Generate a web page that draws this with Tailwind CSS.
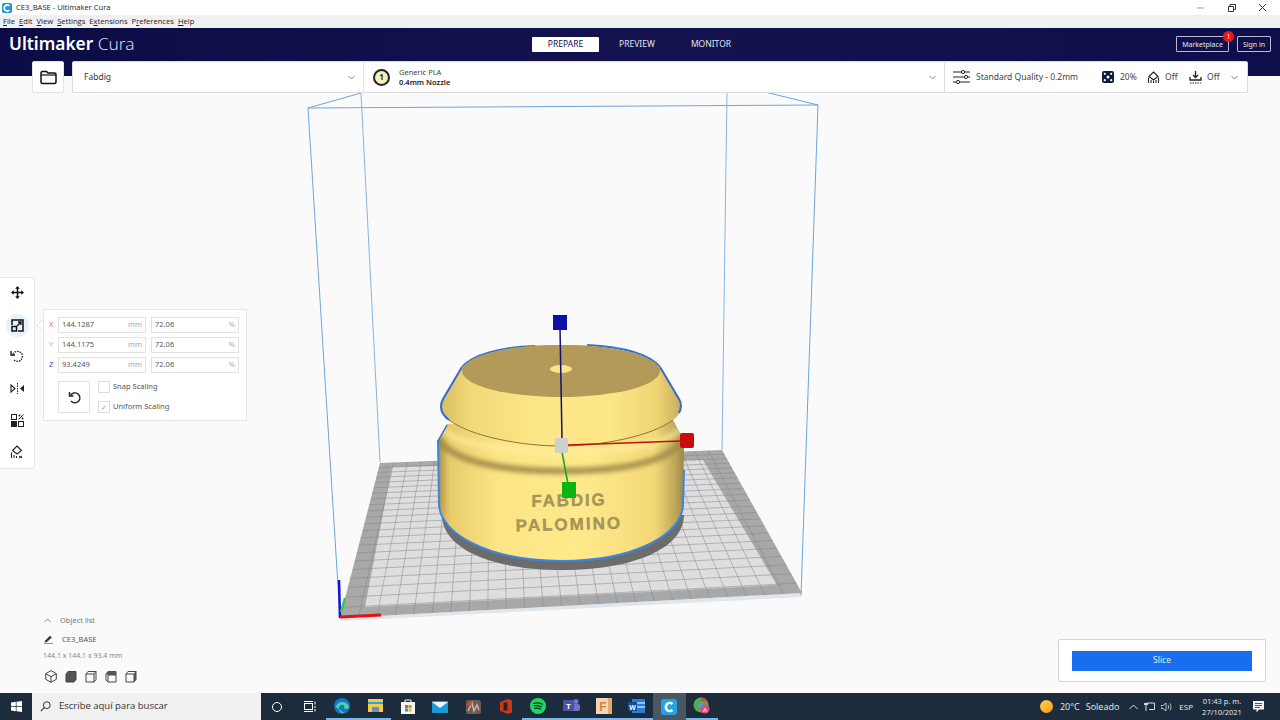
<!DOCTYPE html>
<html lang="es">
<head>
  <meta charset="UTF-8" />
  <title>CE3_BASE - Ultimaker Cura</title>
  <script src="https://cdn.jsdelivr.net/npm/@tailwindcss/browser@4"></script>
</head>
<body class="bg-white overflow-hidden font-['Noto_Sans',sans-serif]">
<div class="w-[1280px] h-[720px] flex flex-col overflow-hidden">

  <!-- Title bar -->
  <div class="h-[15px] bg-white flex items-center justify-between shrink-0">
    <div class="flex items-center gap-[4px] pl-[2px]">
      <svg width="10" height="10" viewBox="0 0 10 10"><rect width="10" height="10" rx="2" fill="#1c9ad6"/><path d="M7.4 3 A3 3 0 1 0 7.4 7" fill="none" stroke="#fff" stroke-width="1.8"/></svg>
      <span class="text-[7.6px] leading-none text-[#222] font-['Open_Sans',sans-serif]">CE3_BASE - Ultimaker Cura</span>
    </div>
    <div class="flex items-center">
      <svg class="mr-[23px]" width="8" height="8" viewBox="0 0 8 8"><path d="M0 4h7" stroke="#999" stroke-width="1"/></svg>
      <svg class="mr-[22px]" width="8" height="8" viewBox="0 0 8 8"><path d="M.5 2.500h5v5h-5zM2 2.500V.5h5.500v5H5.500" fill="none" stroke="#333" stroke-width="1"/></svg>
      <svg class="mr-[13px]" width="9" height="9" viewBox="0 0 9 9"><path d="M1 1l7 7M8 1l-7 7" stroke="#333" stroke-width="1"/></svg>
    </div>
  </div>

  <!-- Menu bar -->
  <div class="h-[13px] bg-[#f0f0f0] flex items-center pl-[3px] pt-[1px] gap-[4px] text-[7.6px] leading-none text-[#222] shrink-0 font-['Open_Sans',sans-serif]">
    <span><u>F</u>ile</span><span><u>E</u>dit</span><span><u>V</u>iew</span><span><u>S</u>ettings</span><span>E<u>x</u>tensions</span><span>P<u>r</u>eferences</span><span><u>H</u>elp</span>
  </div>

  <!-- Header -->
  <div class="relative h-[48px] shrink-0 bg-gradient-to-r from-[#0b0c46] via-[#13124f] to-[#0e0f4a] z-10">
    <div class="absolute left-[9px] top-[3px] text-[17.3px] leading-[26px] text-white whitespace-nowrap"><span class="font-semibold">Ultimaker</span> <span class="font-light text-[#d8d8e8]">Cura</span></div>

    <div class="absolute left-[532px] top-[9px] flex items-center text-[8.5px] leading-none">
      <div class="w-[67px] h-[15px] bg-white text-[#10104e] flex items-center justify-center rounded-[1px]">PREPARE</div>
      <div class="w-[76px] h-[15px] text-[#e4e4f0] flex items-center justify-center">PREVIEW</div>
      <div class="w-[72px] h-[15px] text-[#e4e4f0] flex items-center justify-center">MONITOR</div>
    </div>

    <div class="absolute left-[1176px] top-[8px] flex gap-[8px] text-[7px] leading-none text-[#e6e6f2]">
      <div class="relative w-[53px] h-[16px] border border-[#b9b9cf] rounded-[1px] flex items-center justify-center">Marketplace
        <span class="absolute -right-[6px] -top-[6px] w-[11px] h-[11px] rounded-full bg-[#f01414] text-white text-[7px] flex items-center justify-center">1</span>
      </div>
      <div class="w-[34px] h-[16px] border border-[#b9b9cf] rounded-[1px] flex items-center justify-center">Sign in</div>
    </div>

    <!-- Toolbar hanging over the header -->
    <div class="absolute left-[32px] top-[33px] flex gap-[8px] text-[#333]">
      <div class="w-[32px] h-[32px] bg-white border border-[#e2e2e2] rounded-[2px] flex items-center justify-center">
        <svg width="17" height="15" viewBox="0 0 17 15"><path d="M1 3.500C1 2 1.500 1.500 2.500 1.500H6.500L8 3H14.500C15.500 3 16 3.700 16 4.500V12C16 13 15.500 13.500 14.500 13.500H2.500C1.500 13.500 1 13 1 12Z" fill="none" stroke="#111" stroke-width="1.500"/><path d="M1 5H16" stroke="#111" stroke-width="1.200"/></svg>
      </div>
      <div class="w-[1176px] h-[32px] bg-white border border-[#dcdcdc] rounded-[2px] flex items-center">
        <div class="w-[290px] h-full flex items-center justify-between pl-[11px] pr-[8px] text-[8.5px]">
          <span>Fabdig</span>
          <svg width="7" height="5" viewBox="0 0 7 5"><path d="M.5 1l3 3 3-3" fill="none" stroke="#888" stroke-width="1"/></svg>
        </div>
        <div class="w-[581px] h-full border-l border-[#e4e4e4] flex items-center justify-between pl-[9px] pr-[8px]">
          <div class="flex items-center gap-[9px]">
            <span class="w-[17px] h-[17px] rounded-full bg-[#f7eeb8] border-[2px] border-[#222] flex items-center justify-center text-[8px] font-bold leading-none">1</span>
            <div class="text-[7.5px] leading-[10px]"><div class="text-[#444]">Generic PLA</div><div class="font-semibold text-[#222]">0.4mm Nozzle</div></div>
          </div>
          <svg width="7" height="5" viewBox="0 0 7 5"><path d="M.5 1l3 3 3-3" fill="none" stroke="#888" stroke-width="1"/></svg>
        </div>
        <div class="flex-1 h-full border-l border-[#dcdcdc] flex items-center pl-[8px] text-[8.5px] text-[#444]">
          <svg width="17" height="14" viewBox="0 0 17 14"><path d="M0 2h8M12 2h5M0 7h11M15 7h2M0 12h3M7 12h10" stroke="#222" stroke-width="1.200"/><circle cx="10" cy="2" r="1.600" fill="none" stroke="#222"/><circle cx="13" cy="7" r="1.600" fill="none" stroke="#222"/><circle cx="5" cy="12" r="1.600" fill="none" stroke="#222"/></svg>
          <span class="ml-[6px] w-[126px]">Standard Quality - 0.2mm</span>
          <svg width="12" height="12" viewBox="0 0 12 12"><rect width="12" height="12" rx="2" fill="#0f1a44"/><circle cx="6" cy="6" r="1.500" fill="#fff"/><circle cx="2.800" cy="2.800" r="1.100" fill="#fff"/><circle cx="9.200" cy="2.800" r="1.100" fill="#fff"/><circle cx="2.800" cy="9.200" r="1.100" fill="#fff"/><circle cx="9.200" cy="9.200" r="1.100" fill="#fff"/></svg>
          <span class="ml-[6px] w-[27px]">20%</span>
          <svg width="13" height="13" viewBox="0 0 13 13"><path d="M6.500 1L11 5.500 6.500 9 2 5.500Z" fill="none" stroke="#222" stroke-width="1.100"/><path d="M1.500 6.500V12M4 9v3M6.500 10v2M9 9v3M11.500 6.500V12" stroke="#222" stroke-width="1.100"/></svg>
          <span class="ml-[5px] w-[24px]">Off</span>
          <svg width="13" height="13" viewBox="0 0 13 13"><path d="M6.500 0v6M4 4l2.500 2.500L9 4" fill="none" stroke="#222" stroke-width="1.300"/><path d="M1 6v3h11V6" fill="none" stroke="#222" stroke-width="1.300"/><path d="M1 12h11" stroke="#222" stroke-width="1.100" stroke-dasharray="1.500 1"/></svg>
          <span class="ml-[5px] w-[24px]">Off</span>
          <svg width="7" height="5" viewBox="0 0 7 5"><path d="M.5 1l3 3 3-3" fill="none" stroke="#777" stroke-width="1"/></svg>
        </div>
      </div>
    </div>
  </div>

  <!-- Viewport -->
  <div class="relative flex-1 bg-[#fafafa]">
    <!-- 3D scene: free canvas, page coordinates minus 76px -->
    <svg class="absolute left-0 top-0" width="1280" height="617" viewBox="0 76 1280 617">
      <defs>
        <linearGradient id="side" x1="0" x2="1" y1="0" y2="0">
          <stop offset="0" stop-color="#b89f52"/><stop offset=".05" stop-color="#e8cc6c"/><stop offset=".25" stop-color="#fde585"/><stop offset=".6" stop-color="#ffe98c"/><stop offset=".88" stop-color="#f4d877"/><stop offset="1" stop-color="#a8924e"/>
        </linearGradient>
        <linearGradient id="upper" x1="0" x2="1" y1="0" y2="0">
          <stop offset="0" stop-color="#d9bd62"/><stop offset=".12" stop-color="#f2d877"/><stop offset=".4" stop-color="#fde687"/><stop offset=".7" stop-color="#fde687"/><stop offset=".9" stop-color="#efd473"/><stop offset="1" stop-color="#c9ae5c"/>
        </linearGradient>
        <filter id="soft" x="-10%" y="-50%" width="120%" height="200%"><feGaussianBlur stdDeviation="2.500"/></filter>
        <filter id="softer" x="-20%" y="-20%" width="140%" height="140%"><feGaussianBlur stdDeviation="4"/></filter>
        <clipPath id="bodyClip"><path d="M447 424 L438 440 L439 505 C441 535 490 561 562 561 C634 561 682 535 683 505 L684 440 L673 420 Z"/></clipPath>
      </defs>

      <!-- plate -->
      <polygon points="340,618 801,593 802,597 342,621" fill="#dfe6ec"/>
      <polygon points="340,618 802,593 722,450 380,463" fill="#a8a8a8"/>
      <polygon points="365,607 777,585 703,460 392,467" fill="#dedede"/>
      <g id="grid" stroke="#80858a" stroke-width=".5"></g>

      <!-- build volume -->
      <g fill="none" stroke="#6aa5e0" stroke-width="1">
        <path d="M308 108L818 105M308 108L340 618M818 105L801 595"/>
        <path d="M308 108L361 93M818 105L765 92"/>
        <path d="M361 93L380 462M727 93L722 450" stroke="#86b4e4"/>
      </g>

      <!-- model shadow -->
      <path d="M442 515 C442 548 490 570 562 570 C634 570 684 548 684 515Z" fill="#6c6c6c"/>

      <!-- lower body -->
      <path d="M447 424 L438 440 L439 505 C441 535 490 561 562 561 C634 561 682 535 683 505 L684 440 L673 420 Z" fill="url(#side)"/>
      <g clip-path="url(#bodyClip)">
        <path d="M436 438 C455 464 510 471 562 471 C615 471 668 464 686 438" fill="none" stroke="#a08a48" stroke-width="6" filter="url(#soft)"/>
        <path d="M436 424 C450 445 510 452 562 452 C615 452 672 445 686 424" fill="none" stroke="#fff0a0" stroke-width="7" opacity=".6" filter="url(#soft)"/>
        <path d="M436 440 V510 M686 440 V510" stroke="#8f7c3e" stroke-width="5" filter="url(#softer)"/>
      </g>
      <path d="M438 440 L439 505 C441 535 490 561 562 561 C634 561 682 535 683 505 L684 470" fill="none" stroke="#3a86e0" stroke-width="2"/>
      <path d="M438 441 L447 425" stroke="#3a6fd0" stroke-width="1.500"/>

      <!-- upper body -->
      <path d="M462 367 L443 399 C439 407 441 414 449 420 C470 436 520 446 561 446 C602 446 652 436 673 420 C681 414 683 407 679 399 L660 367Z" fill="url(#upper)"/>
      <path d="M449 420 C470 436 520 446 561 446 C602 446 652 436 673 420" fill="none" stroke="#8a7636" stroke-width="1"/>
      <path d="M462 367 L443 399 C439 407 441 414 449 420 M660 367 L679 399 C682 404 681 409 679 413" fill="none" stroke="#3568d8" stroke-width="2"/>
      <path d="M462 367 C472 355 500 347 535 346 M587 345 C625 347 650 355 660 367" fill="none" stroke="#2f72d8" stroke-width="2"/>
      <ellipse cx="561" cy="371" rx="99" ry="26" fill="#b39a58"/>
      <path d="M462 367 C480 350 520 345 561 345 C602 345 642 350 660 367 L660 372 L462 372Z" fill="#b39a58"/>
      <ellipse cx="561" cy="369" rx="11" ry="4" fill="#fbe588"/>

      <!-- embossed text -->
      <text x="569" y="506" text-anchor="middle" font-family="Liberation Sans" font-weight="700" font-size="17" letter-spacing="1.800" fill="#a79858" stroke="#8f8248" stroke-width=".3" transform="rotate(-1 569 506)">FABDIG</text>
      <text x="569" y="530" text-anchor="middle" font-family="Liberation Sans" font-weight="700" font-size="17" letter-spacing="2" fill="#a79858" stroke="#8f8248" stroke-width=".3" transform="rotate(-1.500 569 530)">PALOMINO</text>

      <!-- scale handles -->
      <path d="M560 328L562 440" stroke="#12126e" stroke-width="1.500"/>
      <path d="M568 445L681 441" stroke="#c01208" stroke-width="1.500"/>
      <path d="M562 452L568 484" stroke="#18a818" stroke-width="1.500"/>
      <rect x="553" y="315" width="14" height="15" fill="#0c10a8"/>
      <rect x="680" y="433" width="14" height="15" rx="2" fill="#cc0c0c"/>
      <rect x="562" y="482" width="14" height="16" fill="#0ab414"/>
      <rect x="555" y="438" width="13" height="15" fill="#cfcfcf"/>

      <!-- origin axes -->
      <path d="M339 580L340 618" stroke="#1010e0" stroke-width="2.500"/>
      <path d="M341 612L345 598" stroke="#28d048" stroke-width="2.500"/>
      <path d="M340 617L381 615" stroke="#e01414" stroke-width="3"/>
    </svg>

    <!-- Left tools -->
    <div class="absolute left-0 top-[201px] w-[35px] h-[192px] bg-white border border-l-0 border-[#e6e6e6] rounded-r-[3px] flex flex-col items-center">
      <div class="h-[28px] flex items-center justify-center">
        <svg width="13" height="13" viewBox="0 0 13 13"><path d="M6.500 1v11M1 6.500h11" stroke="#111" stroke-width="1.500"/><path d="M6.500 0L8.800 2.800H4.200ZM6.500 13L4.200 10.200H8.800ZM0 6.500L2.800 4.200V8.800ZM13 6.500L10.200 8.800V4.200Z" fill="#111"/></svg>
      </div>
      <div class="w-[23px] h-[23px] mt-[7.5px] rounded-full bg-[#e7f0fb] flex items-center justify-center">
        <svg width="13" height="13" viewBox="0 0 13 13"><path d="M1 6V1h11v11H7" fill="none" stroke="#111" stroke-width="1.500"/><rect x="1" y="7.500" width="4.500" height="4.500" fill="none" stroke="#111" stroke-width="1.500"/><path d="M6 7L10 3M7 3h3v3" fill="none" stroke="#111" stroke-width="1.300"/></svg>
      </div>
      <div class="h-[39px] flex items-center justify-center">
        <svg width="14" height="14" viewBox="0 0 14 14"><path d="M3 5A5 5 0 1 1 4 11" fill="none" stroke="#222" stroke-width="1.300" stroke-dasharray="1.500 1"/><path d="M1 2v4h4" fill="none" stroke="#111" stroke-width="1.300"/></svg>
      </div>
      <div class="h-[25px] flex items-center justify-center">
        <svg width="15" height="11" viewBox="0 0 15 11"><path d="M1 2l4 3.500L1 9Z" fill="none" stroke="#222" stroke-width="1.100"/><path d="M14 2l-4 3.500L14 9Z" fill="#222"/><path d="M7.500 0v11" stroke="#222" stroke-dasharray="1.500 1"/></svg>
      </div>
      <div class="h-[39px] flex items-center justify-center">
        <svg width="13" height="13" viewBox="0 0 13 13"><rect x="0.500" y="0.500" width="5" height="5" fill="none" stroke="#222"/><rect y="7" width="6" height="6" fill="#222"/><rect x="7.500" y="7.500" width="5" height="5" fill="none" stroke="#222"/><path d="M7.500 5.500l5-5" stroke="#222"/><circle cx="8.500" cy="1.500" r="1" fill="#222"/><circle cx="11.500" cy="4.500" r="1" fill="#222"/></svg>
      </div>
      <div class="h-[25px] flex items-center justify-center">
        <svg width="14" height="14" viewBox="0 0 14 14"><path d="M7 1L11.500 5.500 7 9 2.500 5.500Z" fill="none" stroke="#222" stroke-width="1.100"/><path d="M1.500 7.500V13M4 10v3M6.500 11v2" stroke="#222" stroke-width="1.100"/><path d="M9 11l3 2M12 11l-3 2" stroke="#222"/></svg>
      </div>
    </div>

    <!-- Scale panel -->
    <div class="absolute left-[38px] top-[245px] w-[9px] h-[9px] bg-white border-l border-b border-[#e6e6e6] rotate-45"></div>
    <div class="absolute left-[43px] top-[233px] w-[204px] h-[112px] bg-white border border-[#e6e6e6] pl-[5px] pt-[7px] text-[7.5px] leading-none text-[#555]">
      <div class="flex items-center h-[16px] mb-[4px]">
        <span class="w-[9px] text-[#d9606a]">X</span>
        <div class="w-[88px] h-[16px] border border-[#e2e2e2] flex items-center justify-between px-[3px]"><span>144.1287</span><span class="text-[#aaa]">mm</span></div>
        <div class="ml-[5px] w-[88px] h-[16px] border border-[#e2e2e2] flex items-center justify-between px-[3px]"><span>72.06</span><span class="text-[#aaa]">%</span></div>
      </div>
      <div class="flex items-center h-[16px] mb-[4px]">
        <span class="w-[9px] text-[#8fcf8f]">Y</span>
        <div class="w-[88px] h-[16px] border border-[#e2e2e2] flex items-center justify-between px-[3px]"><span>144.1175</span><span class="text-[#aaa]">mm</span></div>
        <div class="ml-[5px] w-[88px] h-[16px] border border-[#e2e2e2] flex items-center justify-between px-[3px]"><span>72.06</span><span class="text-[#aaa]">%</span></div>
      </div>
      <div class="flex items-center h-[16px]">
        <span class="w-[9px] text-[#4a4ab8]">Z</span>
        <div class="w-[88px] h-[16px] border border-[#e2e2e2] flex items-center justify-between px-[3px]"><span>93.4249</span><span class="text-[#aaa]">mm</span></div>
        <div class="ml-[5px] w-[88px] h-[16px] border border-[#e2e2e2] flex items-center justify-between px-[3px]"><span>72.06</span><span class="text-[#aaa]">%</span></div>
      </div>
      <div class="flex mt-[8px] ml-[9px]">
        <div class="w-[32px] h-[32px] border border-[#e2e2e2] flex items-center justify-center">
          <svg width="13" height="14" viewBox="0 0 13 14"><path d="M2.500 5.500A5 5 0 1 1 3 11" fill="none" stroke="#222" stroke-width="1.400"/><path d="M1.500 2v4h4" fill="none" stroke="#222" stroke-width="1.400"/></svg>
        </div>
        <div class="ml-[8px] flex flex-col gap-[8px] text-[7.5px]">
          <div class="flex items-center h-[12px] gap-[3px]"><span class="w-[12px] h-[12px] border border-[#ddd]"></span><span>Snap Scaling</span></div>
          <div class="flex items-center h-[12px] gap-[3px]"><span class="w-[12px] h-[12px] border border-[#ddd] flex items-center justify-center text-[7px] text-[#999]">✓</span><span>Uniform Scaling</span></div>
        </div>
      </div>
    </div>

    <!-- Object list -->
    <div class="absolute left-[43px] top-[538px] text-[#666]">
      <div class="flex items-center h-[13px] text-[7.5px] text-[#777]">
        <svg class="ml-[1px]" width="7" height="5" viewBox="0 0 7 5"><path d="M.5 4l3-3 3 3" fill="none" stroke="#888"/></svg>
        <span class="ml-[9px]">Object list</span>
      </div>
      <div class="flex items-center h-[13px] mt-[6px] text-[7.5px] text-[#555]">
        <svg class="ml-[1px]" width="9" height="9" viewBox="0 0 9 9"><path d="M1 6L6 1l1.500 1.500L2.500 7H1ZM0 8.500h9" fill="#333" stroke="#333" stroke-width=".5"/></svg>
        <span class="ml-[9px]">CE3_BASE</span>
      </div>
      <div class="mt-[5px] h-[10px] text-[7px] leading-[10px] text-[#888]">144.1 x 144.1 x 93.4 mm</div>
      <div class="flex gap-[8px] mt-[9px] ml-[2px]">
        <svg width="12" height="13" viewBox="0 0 12 13"><path d="M6 .7l5.300 3v5.600L6 12.300.7 9.300V3.700ZM.7 3.700L6 6.700l5.300-3M6 6.700v5.600" fill="none" stroke="#444" stroke-width="1"/></svg>
        <svg width="12" height="13" viewBox="0 0 12 13"><path d="M3 1.500h8v8l-2 2.500H1V4Z" fill="#555" stroke="#444"/></svg>
        <svg width="12" height="13" viewBox="0 0 12 13"><path d="M3 1.500h8v8l-2 2.500H1V4ZM1 4h8v8M9 4l2-2.500" fill="none" stroke="#444"/></svg>
        <svg width="12" height="13" viewBox="0 0 12 13"><path d="M3 1.500h8v10.500H3L1 10V4ZM3 5h8M3 5v7" fill="none" stroke="#444"/><path d="M3 1.500h8V5H3L1 4Z" fill="#555"/></svg>
        <svg width="12" height="13" viewBox="0 0 12 13"><path d="M3 1.500h8v8l-2 2.500H1V4ZM1 4h8v8M9 4l2-2.500" fill="none" stroke="#444"/><path d="M9 4l2-2.500v8L9 12Z" fill="#555"/></svg>
      </div>
    </div>

    <!-- Slice -->
    <div class="absolute left-[1058px] top-[563px] w-[208px] h-[43px] bg-white border border-[#d4d4d4] rounded-[2px] flex items-center justify-center">
      <div class="w-[180px] h-[20px] bg-[#196ef0] text-[#dbe8fb] text-[8.5px] flex items-center justify-center">Slice</div>
    </div>
  </div>

  <!-- Windows taskbar -->
  <div class="relative h-[27px] shrink-0 bg-[#1c2c3c] flex items-center text-white font-['Open_Sans',sans-serif]">
    <div class="w-[32px] flex justify-center">
      <svg width="11" height="11" viewBox="0 0 11 11" fill="#fff"><path d="M0 1.500L4.800.8V5.200H0ZM5.500.7L11 0V5.200H5.500ZM0 5.900H4.800V10.200L0 9.500ZM5.500 5.900H11V11L5.500 10.300Z"/></svg>
    </div>
    <div class="w-[229px] h-[27px] bg-[#f0f0f0] flex items-center pl-[8px] text-[#333] text-[9.5px]">
      <svg width="11" height="11" viewBox="0 0 11 11"><circle cx="6.800" cy="4.200" r="3.400" fill="none" stroke="#333"/><path d="M4.300 6.700L.8 10.200" stroke="#333" stroke-width="1.100"/></svg>
      <span class="ml-[8px]">Escribe aquí para buscar</span>
    </div>
    <div class="w-[32px] flex justify-center"><span class="w-[10px] h-[10px] rounded-full border-[1.5px] border-white"></span></div>
    <div class="w-[33px] flex justify-center">
      <svg width="12" height="11" viewBox="0 0 12 11"><path d="M0 .5h9M0 10.500h9" stroke="#fff"/><rect x=".5" y="2.500" width="8" height="6" fill="none" stroke="#fff"/><path d="M11 .5v3M11 5v2M11 8v2.500" stroke="#fff"/></svg>
    </div>
    <div class="flex">
      <!-- edge -->
      <div class="w-[32.7px] h-[27px] flex items-center justify-center border-b-2 border-[#76b9ed]"><svg width="16" height="16" viewBox="0 0 16 16"><circle cx="8" cy="8" r="8" fill="#1576c4"/><path d="M2 9C3 3 13 2 15 9c0 2-3 2.500-5 1.500 2-3-3-6-5-1-1 3 2 6 5 5.500" fill="#4ad3a0"/></svg></div>
      <!-- explorer -->
      <div class="w-[32.7px] h-[27px] flex items-center justify-center border-b-2 border-[#76b9ed]"><svg width="15" height="13" viewBox="0 0 15 13"><rect width="15" height="13" fill="#f5c94e"/><rect y="3" width="15" height="2" fill="#2aa4e0"/><rect x="4" y="8" width="7" height="5" fill="#6f8fb0"/></svg></div>
      <!-- store -->
      <div class="w-[32.7px] h-[27px] flex items-center justify-center"><svg width="14" height="15" viewBox="0 0 14 15"><rect y="3" width="14" height="12" fill="#f4f4f4"/><path d="M4 4V1h6v3" fill="none" stroke="#f4f4f4"/><rect x="4" y="6" width="3" height="3" fill="#e8552a"/><rect x="7.500" y="6" width="3" height="3" fill="#7cb82f"/><rect x="4" y="9.500" width="3" height="3" fill="#1c9ad6"/><rect x="7.500" y="9.500" width="3" height="3" fill="#f5b800"/></svg></div>
      <!-- mail -->
      <div class="w-[32.7px] h-[27px] flex items-center justify-center"><svg width="16" height="12" viewBox="0 0 16 12"><rect width="16" height="12" rx="1" fill="#1c9ad6"/><path d="M0 1l8 6 8-6" fill="#e6f4fc"/></svg></div>
      <!-- sketch app -->
      <div class="w-[32.7px] h-[27px] flex items-center justify-center"><svg width="15" height="14" viewBox="0 0 15 14"><rect width="15" height="14" rx="2" fill="#6e5a50"/><path d="M2 11L6 3l2 8 3-6 2 5" fill="none" stroke="#c9b6a6" stroke-width="1.500"/><circle cx="4" cy="4" r="2" fill="#c25438"/></svg></div>
      <!-- office -->
      <div class="w-[32.7px] h-[27px] flex items-center justify-center"><svg width="12" height="15" viewBox="0 0 12 15"><path d="M0 3L8 0l4 1.500v12L8 15 0 12Z" fill="#c8391c"/><rect x="3.500" y="3.500" width="4" height="8" fill="#35201c"/></svg></div>
      <!-- spotify -->
      <div class="w-[32.7px] h-[27px] flex items-center justify-center border-b-2 border-[#76b9ed]"><svg width="16" height="16" viewBox="0 0 16 16"><circle cx="8" cy="8" r="8" fill="#1ed760"/><path d="M3.500 5.500c3-1 6-.7 9 .7M4 8c2.500-.7 5-.5 7.500.7M4.500 10.500c2-.5 4-.4 6 .6" fill="none" stroke="#11301f" stroke-width="1.200" stroke-linecap="round"/></svg></div>
      <!-- teams -->
      <div class="w-[32.7px] h-[27px] flex items-center justify-center border-b-2 border-[#76b9ed]"><svg width="17" height="15" viewBox="0 0 17 15"><circle cx="13" cy="3.500" r="2.500" fill="#6f74c4"/><rect x="8" y="6" width="9" height="7" rx="2" fill="#6f74c4"/><rect y="2" width="11" height="11" rx="1" fill="#4b4fa8"/><text x="5.500" y="10.500" text-anchor="middle" font-size="8" font-weight="700" fill="#fff" font-family="Liberation Sans">T</text></svg></div>
      <!-- F app -->
      <div class="w-[32.7px] h-[27px] flex items-center justify-center border-b-2 border-[#76b9ed]"><svg width="16" height="16" viewBox="0 0 16 16"><rect width="16" height="16" fill="#f2d6b8"/><rect x="12" width="4" height="16" fill="#e8a868"/><text x="7" y="13" text-anchor="middle" font-size="12" font-weight="700" fill="#d8822c" font-family="Liberation Sans">F</text></svg></div>
      <!-- word -->
      <div class="w-[32.7px] h-[27px] flex items-center justify-center border-b-2 border-[#76b9ed]"><svg width="17" height="14" viewBox="0 0 17 14"><rect x="4" width="13" height="14" fill="#2b7cd3"/><rect x="9" y="3" width="8" height="2" fill="#8cc4f0"/><rect x="9" y="7" width="8" height="2" fill="#8cc4f0"/><rect y="3" width="9" height="9" fill="#134a9c"/><text x="4.500" y="10.500" text-anchor="middle" font-size="7" font-weight="700" fill="#fff" font-family="Liberation Sans">W</text></svg></div>
      <!-- cura, active -->
      <div class="w-[32.7px] h-[27px] flex items-center justify-center bg-[#4a5763]"><svg width="16" height="16" viewBox="0 0 16 16"><rect width="16" height="16" rx="3" fill="#22a4e4"/><path d="M11.500 5A4 4 0 1 0 11.500 11" fill="none" stroke="#fff" stroke-width="2.500"/></svg></div>
      <!-- chrome -->
      <div class="w-[32.7px] h-[27px] flex items-center justify-center border-b-2 border-[#76b9ed]"><svg width="17" height="17" viewBox="0 0 17 17"><circle cx="8" cy="8" r="7.500" fill="#4fae55"/><path d="M8 .5a7.500 7.500 0 0 1 6.500 3.700H8Z" fill="#d8483a"/><circle cx="8" cy="8" r="2.500" fill="#5a9ae0"/><circle cx="12" cy="12" r="4.500" fill="#e8457a"/><text x="12" y="14.500" text-anchor="middle" font-size="6" fill="#fff" font-family="Liberation Sans">A</text></svg></div>
    </div>
    <!-- tray -->
    <div class="ml-auto flex items-center h-full text-[9px] leading-none text-[#e8ecef]">
      <span class="w-[13px] h-[13px] rounded-full bg-gradient-to-br from-[#ffd24a] to-[#f59a1c]"></span>
      <span class="ml-[7px]">20°C</span><span class="ml-[6px]">Soleado</span>
      <svg class="ml-[10px]" width="9" height="6" viewBox="0 0 9 6"><path d="M.5 5l4-4 4 4" fill="none" stroke="#ddd"/></svg>
      <svg class="ml-[6px]" width="11" height="10" viewBox="0 0 11 10"><path d="M3 1h7.500v6.500H5" fill="none" stroke="#ddd"/><rect y="1" width="4" height="2" fill="#ddd"/><rect x="1.500" y="3" width="1" height="6" fill="#ddd"/></svg>
      <svg class="ml-[6px]" width="11" height="10" viewBox="0 0 11 10"><path d="M0 3.500h2L5 1v8L2 6.500H0Z" fill="none" stroke="#ddd" stroke-width=".8"/><path d="M7 3c.7 1.300.7 2.700 0 4M9 1.500c1.300 2.300 1.300 4.700 0 7" fill="none" stroke="#ddd" stroke-width=".8"/></svg>
      <span class="ml-[7px] text-[8px]">ESP</span>
      <div class="ml-[9px] w-[40px] text-center text-[7.5px] leading-[11px]"><div>01:43 p. m.</div><div>27/10/2021</div></div>
      <div class="ml-[11px] mr-[16px]"><svg width="11" height="12" viewBox="0 0 11 12"><path d="M0 0h11v8.500H6L3.500 11.500V8.500H0Z" fill="#f2f2f2"/><path d="M2 2.500h7M2 4.500h7M2 6.500h5" stroke="#1c2c3c" stroke-width=".8"/></svg></div>
    </div>
  </div>
</div>

<script>
  // bed grid lines, spaced with a little perspective
  const svgNs = "http://www.w3.org/2000/svg";
  const grid = document.getElementById("grid");
  const corners = { fl: [340, 618], fr: [802, 593], br: [722, 450], bl: [380, 463] };
  const mix = (a, b, t) => [a[0] + (b[0] - a[0]) * t, a[1] + (b[1] - a[1]) * t];
  function addLine(a, b) {
    const l = document.createElementNS(svgNs, "line");
    l.setAttribute("x1", a[0]); l.setAttribute("y1", a[1]);
    l.setAttribute("x2", b[0]); l.setAttribute("y2", b[1]);
    grid.appendChild(l);
  }
  const depth = t => t / (t + (1 - t) * 1.55);
  for (let i = 1; i < 25; i++) {
    addLine(mix(corners.fl, corners.fr, i / 25), mix(corners.bl, corners.br, i / 25));
  }
  for (let i = 1; i < 22; i++) {
    const d = depth(i / 22);
    addLine(mix(corners.bl, corners.fl, d), mix(corners.br, corners.fr, d));
  }
</script>
</body>
</html>
